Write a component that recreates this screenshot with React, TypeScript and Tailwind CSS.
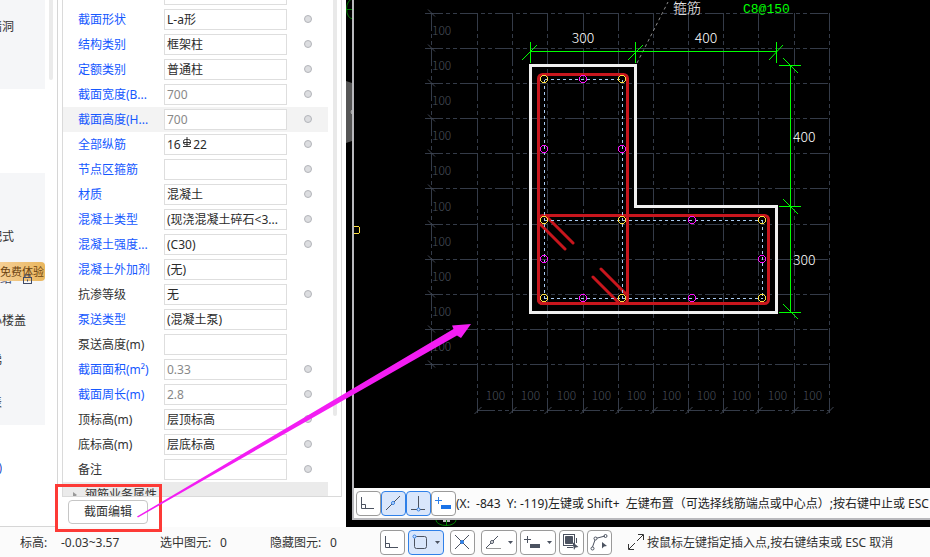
import { useState } from "react";
import type { ReactNode } from "react";
import clsx from "clsx";

type Tone = "link" | "plain" | "calc";

interface Property {
  label: string;
  value: string;
  tone: Tone;
  dot: boolean;
  rebar?: boolean;
}

const properties: Property[] = [
  { label: "截面形状", value: "L-a形", tone: "link", dot: true },
  { label: "结构类别", value: "框架柱", tone: "link", dot: true },
  { label: "定额类别", value: "普通柱", tone: "link", dot: true },
  { label: "截面宽度(B...", value: "700", tone: "calc", dot: true },
  { label: "截面高度(H...", value: "700", tone: "calc", dot: true },
  { label: "全部纵筋", value: "16\u00a0\u00a0\u00a0\u00a022", tone: "link", dot: true, rebar: true },
  { label: "节点区箍筋", value: "", tone: "link", dot: true },
  { label: "材质", value: "混凝土", tone: "link", dot: true },
  { label: "混凝土类型", value: "(现浇混凝土碎石<3...", tone: "link", dot: true },
  { label: "混凝土强度...", value: "(C30)", tone: "link", dot: true },
  { label: "混凝土外加剂", value: "(无)", tone: "link", dot: false },
  { label: "抗渗等级", value: "无", tone: "plain", dot: true },
  { label: "泵送类型", value: "(混凝土泵)", tone: "link", dot: false },
  { label: "泵送高度(m)", value: "", tone: "plain", dot: false },
  { label: "截面面积(m²)", value: "0.33", tone: "calc", dot: true },
  { label: "截面周长(m)", value: "2.8", tone: "calc", dot: true },
  { label: "顶标高(m)", value: "层顶标高", tone: "plain", dot: true },
  { label: "底标高(m)", value: "层底标高", tone: "plain", dot: true },
  { label: "备注", value: "", tone: "plain", dot: true },
];

const inputClass = "h-[21px] w-[123px] border border-[#dedede] bg-white pb-px pl-0.5 outline-none";

function PropertyRow({ property, index, selected, onSelect }: { property: Property; index: number; selected: boolean; onSelect: () => void }) {
  const id = `prop-${index}`;
  return (
    <div className={clsx("flex h-[25px] shrink-0 items-center pl-[15px]", selected && "bg-[#f3f3f3]")} onClick={onSelect}>
      <label htmlFor={id} className={clsx("w-[86px] shrink-0 whitespace-nowrap", property.tone === "plain" ? "text-[#333]" : "text-[#1558ff]")}>
        {property.label}
      </label>
      <div className="relative flex">
        <input
          id={id}
          defaultValue={property.value}
          readOnly={property.tone === "calc"}
          className={clsx(inputClass, property.tone === "calc" ? "text-[#888]" : "text-[#2b2b2b]")}
        />
        {property.rebar && (
          <svg className="absolute left-[18px] top-[3px] h-3 w-2.5" viewBox="0 0 10 12" fill="none" stroke="#333">
            <path d="M5 0v10M1 9.500h8M1 5.500h8" />
            <rect x="1.500" y="2.500" width="7" height="5" rx="2" />
          </svg>
        )}
      </div>
      {property.dot && <span className="mb-px ml-[17px] size-2 rounded-full border border-[#b3b5ba] bg-[#dcdde0]" />}
    </div>
  );
}

function Sidebar() {
  return (
    <aside className="flex w-[58px] shrink-0 flex-col border-r border-b border-[#d6d6d6] text-[#333]">
      <div className="flex h-[89px] justify-between pr-1">
        <div className="w-[45px] bg-[#f5f6f8] pt-[18px]">
          <Clipped text="墙洞" width="w-3.5" />
        </div>
        <div className="h-20 w-1 rounded-b bg-[#ebebeb]" />
      </div>
      <div className="mt-[84px] h-[252px] w-[45px] bg-[#f5f6f8] pt-[55px]">
        <Clipped text="装配式" width="w-3.5" />
        <div className="relative mt-4 h-[19px]">
          <div className="absolute top-2 left-0 flex h-[18px] w-3 justify-end overflow-hidden leading-[18px] text-[#3c4560]">
            <span>结构</span>
          </div>
          <a href="#trial" className="relative block h-[19px] rounded-r-sm bg-linear-to-r from-[#f5cf95] to-[#e9b65c] text-[11px] leading-[19px] whitespace-nowrap text-[#6b4310]">
            免费体验
          </a>
          <svg className="absolute top-3 left-[22px] size-[11px]" viewBox="0 0 11 11" fill="none" stroke="#3f4a66">
            <path d="M3 3V1h5v2" />
            <rect x="1.500" y="3.500" width="8" height="6" />
            <path d="M5.500 5.500v2" />
          </svg>
        </div>
        <div className="mt-[31px]">
          <Clipped text="空心楼盖" width="w-[26px]" />
        </div>
        <div className="mt-[22px]">
          <Clipped text="梯" width="w-0.5" />
        </div>
        <div className="mt-6">
          <Clipped text="表" width="w-0.5" />
        </div>
      </div>
      <div className="mt-[34px] text-[#2c50c8]">
        <Clipped text=")" width="w-0.5" />
      </div>
    </aside>
  );
}

// Sidebar is scrolled sideways, only the tail of each entry is visible
function Clipped({ text, width }: { text: string; width: string }) {
  return (
    <div className={clsx("flex h-[18px] justify-end overflow-hidden leading-[18px] whitespace-nowrap", width)}>
      <span>{text}</span>
    </div>
  );
}

const gridX = [477.5, 512.5, 547.5, 583.5, 618.5, 653.5, 688.5, 723.5, 758.5, 794.5, 829.5];
const gridY = [13.5, 48.5, 83.5, 118.5, 153.5, 188.5, 224.5, 259.5, 294.5, 329.5, 364.5];
const cornerBars = [[544, 79], [622, 79], [544, 220], [622, 220], [762, 220], [544, 298], [622, 298], [762, 298]];
const sideBars = [[583, 79], [544, 149], [622, 149], [692, 220], [544, 259], [762, 259], [583, 298], [692, 298]];

function SectionCanvas() {
  return (
    <svg className="min-h-0 w-full flex-1" viewBox="354 0 576 488" preserveAspectRatio="xMinYMin slice" fill="none">
      <g stroke="#343b48" strokeDasharray="18 3 4 3 4 3" shapeRendering="crispEdges">
        {gridY.map((y) => <path key={y} d={`M425 ${y}H829`} />)}
        {gridX.map((x) => <path key={x} d={`M${x} 13V413`} />)}
        <path d="M431.500 13V369M477 410.500H829" />
      </g>
      <g stroke="#424956">
        {gridY.map((y) => <path key={y} d={`M428 ${y - 4}l7 7`} />)}
        {gridX.map((x) => <path key={x} d={`M${x - 3} 414l7 -7`} />)}
      </g>
      <g fill="#4a505c" fontSize="12" fontWeight="300" className="font-['Noto_Sans_CJK_SC',sans-serif]">
        {gridY.slice(1).map((y) => <text key={y} x="432" y={y - 14}>100</text>)}
        {gridX.slice(1).map((x) => <text key={x} x={x - 17} y="400" textAnchor="middle">100</text>)}
      </g>
      <path d="M637 63L668 2" stroke="#8c8c8c" strokeDasharray="3 3" />

      <path d="M530.500 65.500H635.500V206.500H776.500V312.500H530.500Z" stroke="#f0f0f0" strokeWidth="3" />
      <g stroke="#c8161d" strokeWidth="3" strokeLinecap="round">
        <rect x="538.500" y="74.500" width="89" height="229" rx="4" />
        <rect x="538.500" y="215.500" width="230" height="88" rx="4" />
        <path d="M540 224l25 25M547 217l26 26M601 269l25 25M593 277l25 25" />
      </g>
      <g stroke="#a9cbf2" strokeDasharray="3 3" shapeRendering="crispEdges">
        <path d="M544.500 79.500H622.500M544.500 79.500V298.500M622.500 79.500V298.500M544.500 220.500H762.500M544.500 298.500H762.500M762.500 220.500V298.500" />
      </g>
      <g stroke="#ffe040" shapeRendering="crispEdges">
        {cornerBars.map(([x, y]) => <circle key={`${x}-${y}`} cx={x} cy={y} r="3.500" />)}
        <circle cx="356" cy="230" r="4" />
      </g>
      <g stroke="#ff10ff" shapeRendering="crispEdges">
        {sideBars.map(([x, y]) => <circle key={`${x}-${y}`} cx={x} cy={y} r="3.500" />)}
      </g>

      <g stroke="#00ff00">
        <path d="M530.500 51.500H776.500M530.500 42V63M635.500 42V63M776.500 42V63" />
        <path d="M522 60l15 -15M628 60l15 -15M769 60l14 -15" />
        <path d="M790.500 65.500V312.500M779 65.500h22M779 206.500h22M779 312.500h22" />
        <path d="M783 58l15 15M783 199l15 15M783 304l15 15" />
      </g>
      <g fill="#fff" fontSize="14" fontWeight="300" className="font-['Noto_Sans_CJK_SC',sans-serif]">
        <text x="583" y="43" textAnchor="middle">300</text>
        <text x="706" y="43" textAnchor="middle">400</text>
        <text x="793" y="142">400</text>
        <text x="793" y="265">300</text>
        <text x="673" y="13">箍筋</text>
      </g>
      <text x="743" y="13" fill="#00ff00" fontSize="13" className="font-['Liberation_Mono',monospace]">C8@150</text>
    </svg>
  );
}

function ToolButton({ label, active, wide, spacing, children }: { label: string; active?: boolean; wide?: boolean; spacing?: string; children: ReactNode }) {
  return (
    <button
      aria-label={label}
      className={clsx(
        "flex h-[25px] shrink-0 items-center justify-center rounded border",
        wide ? "w-9" : "w-[25px]",
        active ? "border-[#2f80e8] bg-[#d9e6fb]" : "border-[#9a9a9a] bg-white",
        spacing,
      )}
    >
      <svg className={clsx("h-[23px]", wide ? "w-[34px]" : "w-[23px]")} viewBox={wide ? "0 0 34 23" : "0 0 23 23"} fill="none" stroke="#4b5260">
        {children}
        {wide && <path d="M26 10h5l-2.500 3z" fill="#4b5260" stroke="none" />}
      </svg>
    </button>
  );
}

const orthoIcon = <path d="M4.500 5v11.500H17M4.500 12.500h4v4" />;

function DrawingWindow() {
  return (
    <div className="flex min-w-0 flex-1 flex-col bg-black">
      <div className="flex min-h-0 flex-1">
        <svg className="h-full w-1.5 shrink-0" fill="none">
          <ellipse cx="7" cy="9" rx="6.500" ry="10" stroke="#007c00" />
          <path d="M0 9.500h6" stroke="#007c00" />
          <path d="M0 81l6 2v58l-6 2z" fill="#555" />
          <path d="M6 110l-1 2 1 2" stroke="#bbb" />
        </svg>
        <div className="flex min-w-0 flex-1 flex-col border-b-2 border-l-2 border-[#b9b9bd] bg-black">
          <SectionCanvas />
          <div className="flex h-[30px] shrink-0 items-center overflow-hidden bg-[#fcfcfc] pl-0.5">
            <ToolButton label="正交">{orthoIcon}</ToolButton>
            <ToolButton label="直线捕捉" active>
              <path d="M4 18L18 4" />
              <circle cx="11" cy="11" r="1.500" stroke="#2f80e8" fill="#d9e6fb" />
            </ToolButton>
            <ToolButton label="垂足捕捉" active>
              <path d="M11.500 4v12M4 17.500h14" />
              <circle cx="11.500" cy="17.500" r="1.500" stroke="#2f80e8" fill="#d9e6fb" />
            </ToolButton>
            <ToolButton label="动态输入">
              <path d="M3 8.500h7M6.500 5v7" stroke="#2f80e8" />
              <path d="M9 13h10v4H9z" fill="#1a73e8" stroke="none" />
            </ToolButton>
            <p className="pt-0.5 whitespace-pre text-[#222]">(X:  -843  Y: -119)左键或 Shift+  左键布置（可选择线筋端点或中心点）;按右键中止或 ESC 取消</p>
          </div>
        </div>
      </div>
      <svg className="h-[7px] w-full shrink-0" fill="none">
        <ellipse cx="100" cy="0" rx="10" ry="5.500" stroke="#007c00" />
        <path d="M97 0h7v2h-7z" fill="#bbb" />
        <path d="M100.500 0v6" stroke="#007c00" />
      </svg>
    </div>
  );
}

function StatusBar() {
  return (
    <footer className="flex h-[30px] shrink-0 items-center overflow-hidden bg-[#fbfbfb] pl-5 whitespace-nowrap text-[#333]">
      <div className="flex shrink-0 pt-0.5">
        <span className="w-[41px]">标高:</span>
        <span className="w-[99px]">-0.03~3.57</span>
        <span className="w-[60px]">选中图元:</span>
        <span className="w-[50px]">0</span>
        <span className="w-[60px]">隐藏图元:</span>
        <span className="w-[50px]">0</span>
      </div>
      <div className="flex shrink-0 items-center gap-[3px]">
        <ToolButton label="正交">{orthoIcon}</ToolButton>
        <ToolButton label="对象捕捉" active wide>
          <rect x="5.500" y="5.500" width="12" height="12" rx="2" />
          <circle cx="5.500" cy="5.500" r="1.500" stroke="#2f80e8" fill="#d9e6fb" />
        </ToolButton>
        <ToolButton label="交点捕捉" spacing="mx-[3px]">
          <path d="M4 4l14 14M18 4L4 18" />
          <circle cx="11" cy="11" r="1.500" stroke="#2f80e8" fill="#2f80e8" />
        </ToolButton>
        <ToolButton label="角度" wide>
          <path d="M4 17l12-12" />
          <path d="M4 17.500h15" stroke="#999" />
          <circle cx="10" cy="11" r="1.500" fill="#fff" />
        </ToolButton>
        <ToolButton label="动态输入" wide>
          <path d="M3 8.500h7M6.500 5v7" />
          <path d="M9 13h10v4H9z" fill="#4b5260" stroke="none" />
        </ToolButton>
        <ToolButton label="选择图层">
          <rect x="3.500" y="3.500" width="11" height="11" />
          <path d="M5.500 5.500h7v7h-7z" fill="#4b5260" />
          <path d="M16.500 7v5M7 16.500h6" />
          <path d="M12.500 11l6 5-3 .500-1.500 2.500z" fill="#4b5260" stroke="none" />
        </ToolButton>
        <ToolButton label="折线选择">
          <path d="M4.500 16L7.500 7.500 17 5" />
          <circle cx="4.500" cy="17.500" r="1.500" />
          <circle cx="7.500" cy="7.500" r="1.500" fill="#fff" />
          <circle cx="17.500" cy="5" r="1.500" />
          <path d="M14 11l5 4-3 .500-2 2z" fill="#4b5260" stroke="none" />
        </ToolButton>
      </div>
      <svg className="ml-4 h-4 w-4 shrink-0" viewBox="0 0 16 16" fill="none" stroke="#333">
        <path d="M9 7l6-6M10 .500h5.500V6M7 9l-6 6M.500 10v5.500H6" />
      </svg>
      <span className="ml-[3px] pt-0.5">按鼠标左键指定插入点,按右键结束或 ESC 取消</span>
    </footer>
  );
}

export default function App() {
  const [selected, setSelected] = useState(4);

  return (
    <div className="relative flex h-screen flex-col overflow-hidden bg-white font-['Noto_Sans','Noto_Sans_CJK_SC',sans-serif] text-[12px]">
      <div className="flex min-h-0 flex-1">
        <Sidebar />
        <section className="mx-1 flex w-[280px] shrink-0 flex-col">
          <div className="flex min-h-0 flex-1 border-x border-b border-[#dadada]">
            <div className="flex w-[265px] shrink-0 flex-col overflow-hidden">
              <div className="flex h-[7px] shrink-0 items-end pb-0.5 pl-[101px]">
                <input aria-label="名称" className={inputClass} />
              </div>
              {properties.map((property, index) => (
                <PropertyRow
                  key={property.label}
                  property={property}
                  index={index}
                  selected={selected === index}
                  onSelect={() => setSelected(index)}
                />
              ))}
              <button className="flex h-[25px] shrink-0 items-center gap-2 bg-[#ebebeb] pl-2.5 text-[#333]">
                <svg className="h-2 w-1" viewBox="0 0 4 8" fill="#999">
                  <path d="M0 1l4 3-4 3z" />
                </svg>
                钢筋业务属性
              </button>
            </div>
            <div className="ml-[5px] h-[416px] w-1 rounded-b bg-[#e9e9e9]" />
          </div>
          <div className="flex h-[30px] shrink-0 items-center pl-1.5">
            <button className="h-6 w-20 rounded border border-[#c6c6c6] bg-white text-[#333]">截面编辑</button>
          </div>
        </section>
        <DrawingWindow />
      </div>
      <StatusBar />

      {/* callout: edit button -> drawing */}
      <svg className="pointer-events-none absolute inset-0 size-full" fill="none">
        <rect x="56.500" y="485.500" width="104" height="45" stroke="#fd3a36" strokeWidth="3" />
        <path d="M137 516.500L453.500 329 452 325.500 471 324 461 338 457 335.500 138 517.500z" fill="#f31df3" />
      </svg>
    </div>
  );
}
